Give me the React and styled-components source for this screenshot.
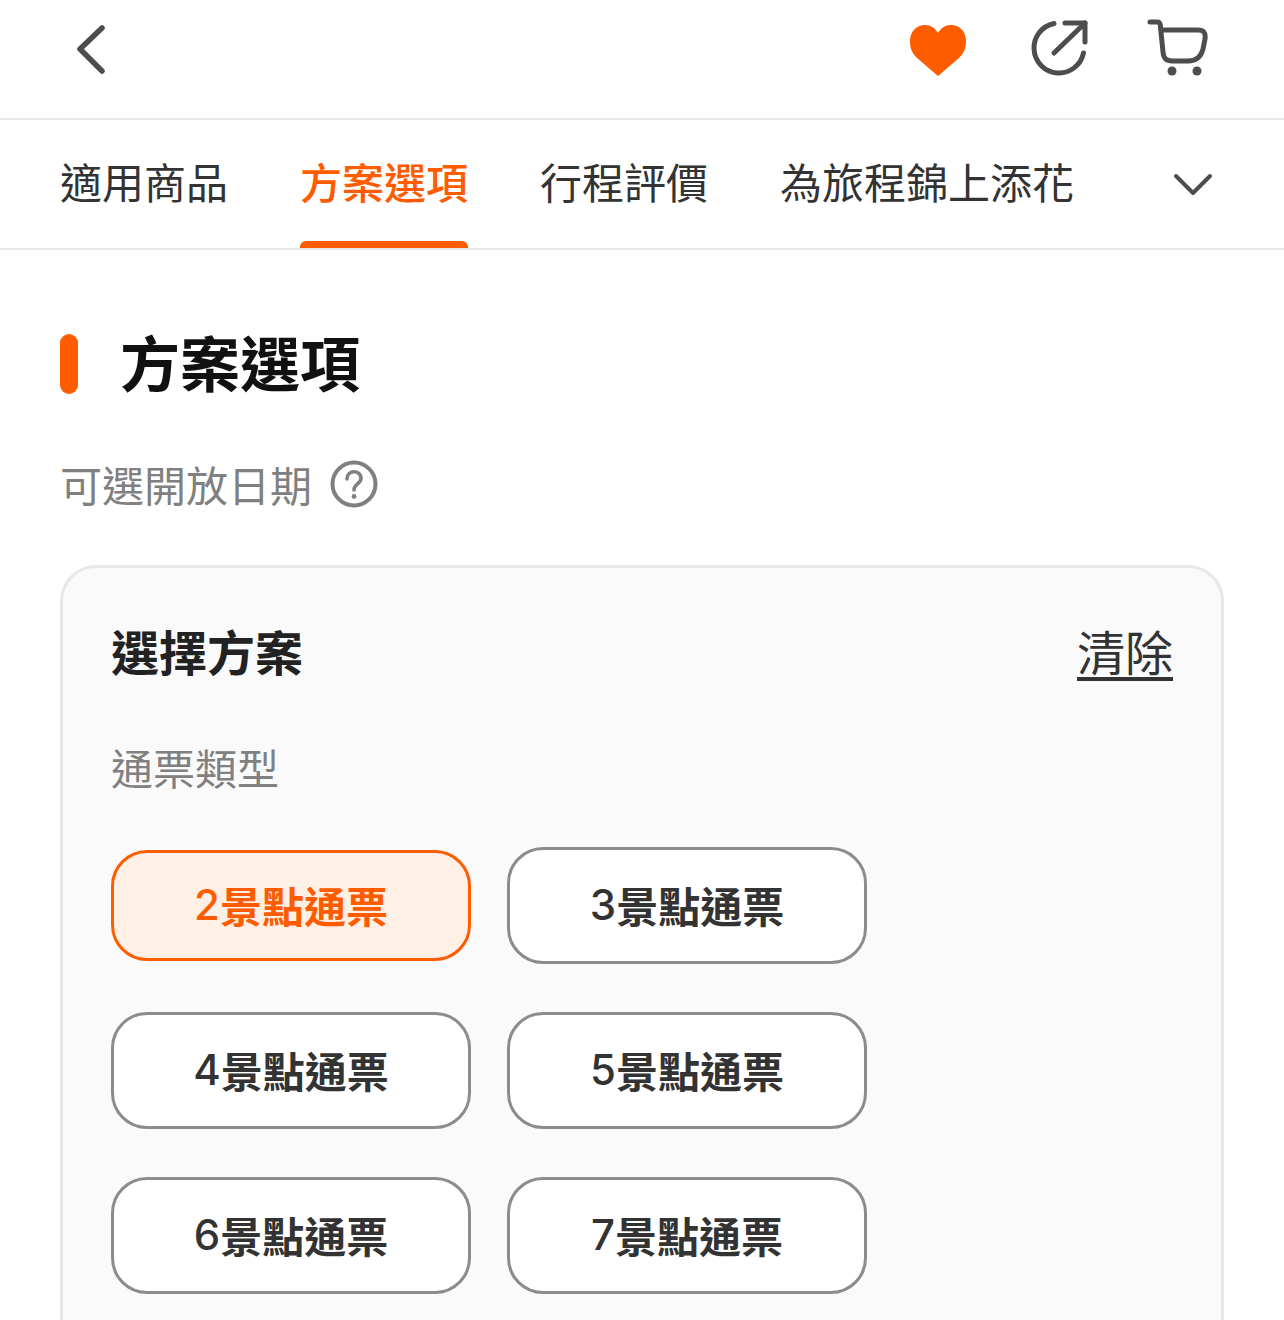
import React from 'react';
import styled, { createGlobalStyle } from 'styled-components';

const tabs = ['適用商品', '方案選項', '行程評價', '為旅程錦上添花'];
const options = [2, 3, 4, 5, 6, 7];

const App = () => {
	return (
		<Page>
			<GlobalStyle />
			<Header>
				<IconButton aria-label="back">
					<svg width="36" height="54" viewBox="0 0 36 54" fill="none">
						<path d="M28 6 L6 27 L28 49" stroke="#4d4d4d" strokeWidth="5.5" strokeLinecap="round" strokeLinejoin="round" />
					</svg>
				</IconButton>
				<HeaderActions>
					<svg width="63" height="58" viewBox="0 -5 63 58">
						<path d="M29 52 L8 34 C3 29 1 24 1 17 C1 7 8 1 16 1 C22 1 26 4 29 9 C32 4 36 1 42 1 C50 1 57 7 57 17 C57 24 55 29 50 34 Z" fill="#ff5c00" />
					</svg>
					<svg width="60" height="60" viewBox="0 0 60 60" fill="none" stroke="#4d4d4d" strokeWidth="5" strokeLinecap="round" strokeLinejoin="round">
						<path d="M25 4.5 A25 25 0 1 0 54.5 34" />
						<path d="M36 4 H56 V23" />
						<path d="M56 4 L25 34" />
					</svg>
					<svg width="62" height="60" viewBox="0 0 62 60" fill="none">
						<path d="M4 3 H11 C13 3 14 4 14.3 6 L17 33 C17.5 39 20 42 26 42 H42 C50 42 55 38 57 30 L59 20 C60 13 57 11 52 11 H15" stroke="#4d4d4d" strokeWidth="5" strokeLinecap="round" strokeLinejoin="round" />
						<circle cx="26" cy="52" r="4.5" fill="#4d4d4d" />
						<circle cx="51" cy="52" r="4.5" fill="#4d4d4d" />
					</svg>
				</HeaderActions>
			</Header>
			<TabBar>
				{tabs.map((tab, i) => (
					<Tab key={tab} $active={i === 1}>
						{tab}
					</Tab>
				))}
				<Chevron>
					<svg width="42" height="28" viewBox="0 0 42 28" fill="none">
						<path d="M4 6 L21 23 L38 6" stroke="#4d4d4d" strokeWidth="4" strokeLinecap="round" strokeLinejoin="round" />
					</svg>
				</Chevron>
			</TabBar>
			<Content>
				<SectionTitle>
					<Marker />
					<TitleText>方案選項</TitleText>
				</SectionTitle>
				<DateLabel>
					<DateText>可選開放日期</DateText>
					<svg width="48" height="48" viewBox="0 0 48 48" fill="none" stroke="#808080">
						<circle cx="24" cy="24" r="21.5" strokeWidth="4" />
						<path d="M17 19 C17 9.5 31 9.5 31 18.5 C31 23.5 24 24 24 30" strokeWidth="3.6" strokeLinecap="round" />
						<circle cx="24" cy="36.5" r="2.4" fill="#808080" stroke="none" />
					</svg>
				</DateLabel>
				<Card>
					<CardHead>
						<CardTitle>選擇方案</CardTitle>
						<ClearLink>清除</ClearLink>
					</CardHead>
					<TypeLabel>通票類型</TypeLabel>
					<OptionGrid>
						{options.map((n, i) => (
							<Option key={n} $selected={i === 0}>
								<Digit>{n}</Digit>景點通票
							</Option>
						))}
					</OptionGrid>
				</Card>
			</Content>
		</Page>
	);
};

export default App;

const GlobalStyle = createGlobalStyle`
	html, body {
		margin: 0;
		padding: 0;
		background: #fff;
	}
	body {
		font-family: 'Inter', 'Noto Sans CJK TC', sans-serif;
	}
`;

const Page = styled.div`
	width: 1284px;
	height: 1320px;
	overflow: hidden;
	background: #fff;
`;

const Header = styled.header`
	box-sizing: border-box;
	height: 120px;
	padding: 22px 76px 0 74px;
	display: flex;
	justify-content: space-between;
	align-items: flex-start;
	border-bottom: 2px solid #e8e8e8;
`;

const IconButton = styled.div`
	display: flex;
`;

const HeaderActions = styled.div`
	display: flex;
	align-items: flex-start;
	gap: 57px;
	margin-top: -3px;
`;

const TabBar = styled.nav`
	box-sizing: border-box;
	height: 130px;
	padding: 0 70px 0 60px;
	display: flex;
	gap: 72px;
	border-bottom: 2px solid #e8e8e8;
`;

const Tab = styled.div`
	position: relative;
	height: 128px;
	line-height: 127px;
	font-size: 42px;
	font-weight: ${(p) => (p.$active ? 500 : 400)};
	color: ${(p) => (p.$active ? '#ff5c00' : '#333')};
	white-space: nowrap;
	&::after {
		content: '';
		display: ${(p) => (p.$active ? 'block' : 'none')};
		position: absolute;
		left: 0;
		right: 0;
		bottom: 0;
		height: 7px;
		border-radius: 6px 6px 0 0;
		background: #ff5c00;
	}
`;

const Chevron = styled.div`
	margin-left: auto;
	display: flex;
	align-items: center;
`;

const Content = styled.main`
	padding: 0 60px;
`;

const SectionTitle = styled.h2`
	margin: 0;
	padding-top: 84px;
	height: 60px;
	display: flex;
	align-items: center;
	font-size: 60px;
	font-weight: 700;
	color: #111;
	box-sizing: content-box;
`;

const TitleText = styled.span`
	margin-bottom: 8px;
`;

const Marker = styled.span`
	width: 18px;
	height: 60px;
	border-radius: 9px;
	background: #ff5c00;
	margin-right: 42px;
`;

const DateLabel = styled.div`
	margin-top: 65px;
	height: 50px;
	display: flex;
	align-items: center;
	gap: 18px;
	font-size: 42px;
	color: #808080;
`;

const DateText = styled.span`
	margin-bottom: 2px;
`;

const Card = styled.section`
	box-sizing: border-box;
	margin-top: 56px;
	height: 900px;
	padding: 48px;
	background: #fafafa;
	border: 3px solid #e8e8e8;
	border-radius: 36px;
`;

const CardHead = styled.div`
	display: flex;
	justify-content: space-between;
	align-items: center;
	height: 68px;
`;

const CardTitle = styled.h3`
	margin: 0;
	font-size: 48px;
	font-weight: 700;
	color: #222;
`;

const ClearLink = styled.a`
	font-size: 48px;
	color: #333;
	text-decoration: underline;
	text-underline-offset: 6px;
`;

const TypeLabel = styled.div`
	margin-top: 61px;
	height: 50px;
	line-height: 50px;
	font-size: 42px;
	color: #808080;
`;

const OptionGrid = styled.div`
	margin-top: 52px;
	display: grid;
	grid-template-columns: repeat(2, 360px);
	grid-auto-rows: 117px;
	column-gap: 36px;
	row-gap: 48px;
	align-items: center;
`;

const Option = styled.div`
	box-sizing: border-box;
	height: ${(p) => (p.$selected ? '111px' : '117px')};
	padding-bottom: 2px;
	display: flex;
	align-items: center;
	justify-content: center;
	border-radius: 36px;
	border: 3px solid ${(p) => (p.$selected ? '#ff5c00' : '#8c8c8c')};
	background: ${(p) => (p.$selected ? '#fff0e6' : '#fff')};
	color: ${(p) => (p.$selected ? '#ff5c00' : '#333')};
	font-size: 42px;
	font-weight: 600;
`;

const Digit = styled.span`
	font-weight: 500;
`;
